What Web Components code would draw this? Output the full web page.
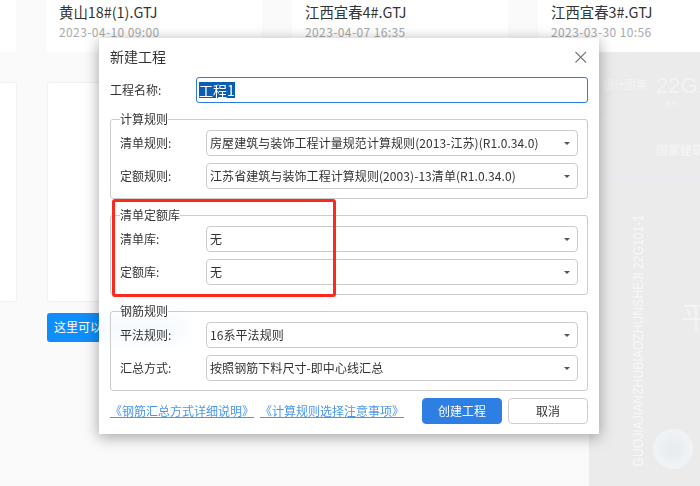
<!DOCTYPE html>
<html lang="zh">
<head>
<meta charset="utf-8">
<title>新建工程</title>
<style>
  html, body { margin: 0; height: 100%; }
  body { width: 700px; height: 486px; overflow: hidden; background: #fafafa; font-family: "Noto Sans CJK SC", "Liberation Sans", sans-serif; }
</style>
</head>
<body>
<project-page>
  <file-card slot="files" name="" date="" style="width:16px"></file-card>
  <file-card slot="files" name="黄山18#(1).GTJ" date="2023-04-10 09:00"></file-card>
  <file-card slot="files" name="江西宜春4#.GTJ" date="2023-04-07 16:35"></file-card>
  <file-card slot="files" name="江西宜春3#.GTJ" date="2023-03-30 10:56"></file-card>

  <new-project-dialog slot="dialog" heading="新建工程">
    <name-row label="工程名称:" value="工程1"></name-row>
    <rule-group legend="计算规则">
      <select-row label="清单规则:" value="房屋建筑与装饰工程计量规范计算规则(2013-江苏)(R1.0.34.0)"></select-row>
      <select-row label="定额规则:" value="江苏省建筑与装饰工程计算规则(2003)-13清单(R1.0.34.0)"></select-row>
    </rule-group>
    <rule-group legend="清单定额库">
      <select-row label="清单库:" value="无"></select-row>
      <select-row label="定额库:" value="无"></select-row>
    </rule-group>
    <rule-group legend="钢筋规则">
      <select-row label="平法规则:" value="16系平法规则"></select-row>
      <select-row label="汇总方式:" value="按照钢筋下料尺寸-即中心线汇总"></select-row>
    </rule-group>
    <dialog-footer></dialog-footer>
  </new-project-dialog>
</project-page>

<script>
class ProjectPage extends HTMLElement {
  connectedCallback() {
    this.attachShadow({ mode: 'open' });
    this.shadowRoot.innerHTML = `
      <style>
        :host { display: block; position: relative; width: 700px; height: 486px; overflow: hidden; background: #fafafa; }
        .files { display: flex; gap: 30px; height: 52px; }
        .panels { display: flex; gap: 30px; margin-top: 30px; }
        .panel { width: 216px; height: 220px; flex: none; background: #fff; border: 1px solid #f1f1f1; border-radius: 3px; box-sizing: border-box; }
        .panel.cut { width: 17px; border-left: 0; }
        .hint {
          margin: 11px 0 0 47px; width: 140px; height: 29px; line-height: 28px; padding-left: 7px; box-sizing: border-box;
          background: #0f8efb; color: #fff; font-size: 12px; border-radius: 3px;
        }
        .cover {
          position: absolute; left: 589px; top: 52px; width: 111px; height: 434px; overflow: hidden;
          background: #ebebeb; color: rgba(255,255,255,.45);
        }
        .cover span { position: absolute; white-space: nowrap; }
        .line { position: absolute; left: 0; right: 0; height: 1px; background: rgba(232,238,250,.9); }
        .spine-box { position: absolute; left: 40px; top: 161px; width: 18px; height: 256px; display: flex; align-items: center; justify-content: center; }
        .spine-box span {
          position: static; writing-mode: vertical-rl; transform: rotate(180deg) scaleY(.87);
          font: 14px "Liberation Sans", sans-serif; color: rgba(255,255,255,.65);
        }
        .seal {
          position: absolute; left: 64px; top: 377px; width: 38px; height: 38px; border-radius: 50%;
          background: radial-gradient(circle, #e9edf0 25%, #eef2f5 55%, #f1f5f8 100%);
          border: 1px solid #f1f5f8;
        }
      </style>
      <div class="files"><slot name="files"></slot></div>
      <div class="panels">
        <div class="panel cut"></div>
        <div class="panel"></div>
      </div>
      <div class="hint">这里可以</div>
      <div class="cover">
        <span style="left:14px;top:24px;font-size:11px">设计图集</span>
        <span style="left:67px;top:21px;font:22px 'Liberation Sans',sans-serif">22G1</span>
        <span style="left:73px;top:47px;font-size:6px">( 替代</span>
        <i class="line" style="top:67px"></i>
        <span style="left:67px;top:89px;font-size:12px;font-weight:700">国家建筑</span>
        <i class="line" style="top:128px"></i>
        <div class="spine-box"><span>GUOJIAJIANZHUBIAOZHUNSHEJI 22G101-1</span></div>
        <span style="left:92px;top:241px;font-size:30px">平</span>
        <i class="seal"></i>
      </div>
      <slot name="dialog"></slot>
    `;
  }
}
customElements.define('project-page', ProjectPage);

class FileCard extends HTMLElement {
  connectedCallback() {
    this.attachShadow({ mode: 'open' });
    this.shadowRoot.innerHTML = `
      <style>
        :host { display: block; flex: none; width: 216px; height: 52px; box-sizing: border-box; padding: 1px 0 0 13px; background: #fff; border-radius: 0 0 3px 3px; }
        :host(:last-child) { width: 161px; }
        .name { font-size: 14.4px; line-height: 22px; height: 22px; color: #333; }
        .date { font-size: 12px; line-height: 18px; color: #aaa; letter-spacing: .4px; }
      </style>
      <div class="name">${this.getAttribute('name')}</div>
      <div class="date">${this.getAttribute('date')}</div>
    `;
  }
}
customElements.define('file-card', FileCard);

class NewProjectDialog extends HTMLElement {
  connectedCallback() {
    this.attachShadow({ mode: 'open' });
    this.shadowRoot.innerHTML = `
      <style>
        :host {
          display: block; position: absolute; left: 99px; top: 38px; width: 500px; height: 396px; box-sizing: border-box;
          background: rgba(255,255,255,.965); -webkit-backdrop-filter: blur(8px); backdrop-filter: blur(8px);
          box-shadow: 0 3px 14px rgba(0,0,0,.36); padding: 0 11px;
          color: #333; font-size: 12px;
        }
        header { display: flex; justify-content: space-between; align-items: center; height: 38px; }
        h1 { margin: 0 0 2px; font-size: 14px; font-weight: 400; }
        svg { display: block; margin-right: 1px; }
        .body { display: flex; flex-direction: column; gap: 16px; }
      </style>
      <header>
        <h1>${this.getAttribute('heading')}</h1>
        <svg width="13" height="13" viewBox="0 0 13 13" fill="none" stroke="#777" stroke-width="1.1"><path d="M1.5 1L12 11.5M12 1L1.5 11.5"/></svg>
      </header>
      <div class="body"><slot></slot></div>
      <red-mark></red-mark>
    `;
  }
}
customElements.define('new-project-dialog', NewProjectDialog);

class NameRow extends HTMLElement {
  connectedCallback() {
    this.attachShadow({ mode: 'open' });
    this.shadowRoot.innerHTML = `
      <style>
        :host { display: flex; align-items: center; height: 26px; margin-top: 1px; }
        label { width: 86px; flex: none; padding-bottom: 2px; }
        .input { flex: 1; height: 26px; box-sizing: border-box; border: 1px solid #2d7de0; border-radius: 3px; padding: 3px 2px; display: flex; align-items: center; background: #fff; }
        .sel { background: #0a5db5; color: #fff; line-height: 16px; height: 16px; display: block; font-size: 14px; margin-bottom: 1px; }
      </style>
      <label>${this.getAttribute('label')}</label>
      <div class="input"><span class="sel">${this.getAttribute('value')}</span></div>
    `;
  }
}
customElements.define('name-row', NameRow);

class RuleGroup extends HTMLElement {
  connectedCallback() {
    this.attachShadow({ mode: 'open' });
    this.shadowRoot.innerHTML = `
      <style>
        :host {
          display: flex; flex-direction: column; gap: 7px; position: relative; height: 80px; box-sizing: border-box;
          padding: 10px 9px 0; border: 1px solid #ccc; border-radius: 3px;
        }
        .legend { position: absolute; left: 9px; top: -9px; line-height: 15px; background: #fff; }
      </style>
      <div class="legend">${this.getAttribute('legend')}</div>
      <slot></slot>
    `;
  }
}
customElements.define('rule-group', RuleGroup);

class SelectRow extends HTMLElement {
  connectedCallback() {
    this.attachShadow({ mode: 'open' });
    this.shadowRoot.innerHTML = `
      <style>
        :host { display: flex; align-items: center; height: 26px; }
        label { width: 86px; flex: none; padding-bottom: 2px; }
        .select {
          flex: 1; height: 26px; box-sizing: border-box; border: 1px solid #ccc; border-radius: 4px; padding: 0 6px 0 3px;
          display: flex; align-items: center; justify-content: space-between; background: #fff; color: #333; white-space: nowrap;
        }
        .select span { padding-bottom: 2px; letter-spacing: .07px; }
        .caret { width: 0; height: 0; border: 3px solid transparent; border-top: 3px solid #555; border-bottom: 0; margin-right: 1px; }
      </style>
      <label>${this.getAttribute('label')}</label>
      <div class="select"><span>${this.getAttribute('value')}</span><i class="caret"></i></div>
    `;
  }
}
customElements.define('select-row', SelectRow);

class DialogFooter extends HTMLElement {
  connectedCallback() {
    this.attachShadow({ mode: 'open' });
    this.shadowRoot.innerHTML = `
      <style>
        :host { display: flex; align-items: center; height: 26px; margin-top: -9px; }
        a { color: #4a96ee; text-decoration: underline; font-size: 12px; white-space: nowrap; margin-right: 6px; margin-bottom: 2px; }
        .spacer { flex: 1; }
        button {
          width: 80px; height: 26px; box-sizing: border-box; padding: 0 0 2px; border-radius: 4px; font: inherit; font-size: 12px;
        }
        .ok { background: #2d7fe3; border: 1px solid #2d7fe3; color: #fff; margin-right: 6px; }
        .no { background: #fff; border: 1px solid #ccc; color: #333; }
      </style>
      <a href="#a">《钢筋汇总方式详细说明》</a>
      <a href="#b">《计算规则选择注意事项》</a>
      <span class="spacer"></span>
      <button class="ok">创建工程</button>
      <button class="no">取消</button>
    `;
  }
}
customElements.define('dialog-footer', DialogFooter);

class RedMark extends HTMLElement {
  connectedCallback() {
    this.attachShadow({ mode: 'open' });
    this.shadowRoot.innerHTML = `
      <style>
        :host { display: block; position: absolute; left: 13px; top: 161px; width: 224px; height: 98px; box-sizing: border-box; border: 3px solid #fb2a1c; border-radius: 3px; pointer-events: none; }
      </style>
    `;
  }
}
customElements.define('red-mark', RedMark);
</script>
</body>
</html>
